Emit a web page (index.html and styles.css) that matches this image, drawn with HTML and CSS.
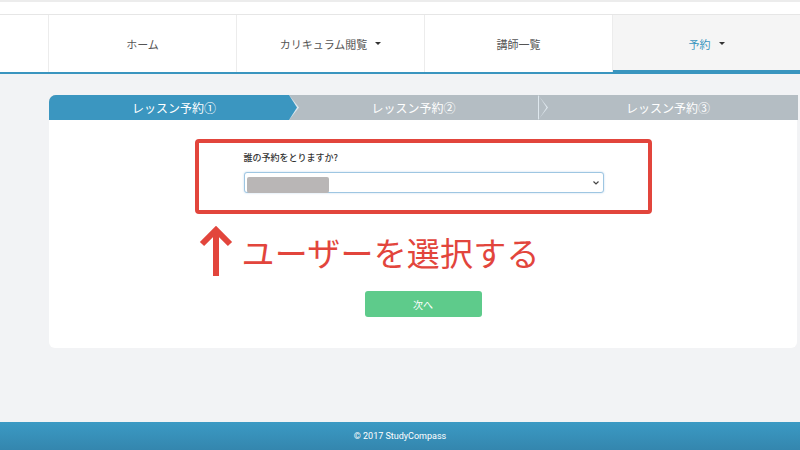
FILE: index.html
```html
<!DOCTYPE html>
<html lang="ja">
<head>
<meta charset="utf-8">
<title>レッスン予約</title>
<link rel="stylesheet" href="styles.css">
</head>
<body>
<div class="page">
  <div class="topbar"></div>
  <nav class="nav">
    <div class="nav-blank"></div>
    <a class="nav-item">ホーム</a>
    <a class="nav-item">カリキュラム閲覧<span class="caret"></span></a>
    <a class="nav-item">講師一覧</a>
    <a class="nav-item active">予約<span class="caret"></span></a>
  </nav>
  <main class="main">
    <div class="steps">
      <div class="step step1">レッスン予約①</div>
      <div class="step step2">レッスン予約②</div>
      <div class="step step3">レッスン予約③</div>
    </div>
    <div class="card">
      <div class="inner">
        <div class="highlight">
          <div class="field">
            <div class="label">誰の予約をとりますか?</div>
            <div class="select">
              <span class="blur"></span>
              <svg class="chev" width="8" height="6" viewBox="0 0 8 6"><path d="M1.5 1.5 L4 4 L6.5 1.5" fill="none" stroke="#444" stroke-width="1.2"/></svg>
            </div>
          </div>
        </div>
        <div class="note">
          <svg class="arrow" width="34" height="52" viewBox="0 0 34 52">
            <path d="M17 4 V50" stroke="#e2453c" stroke-width="6" fill="none"/>
            <path d="M3 18 L17 4 L31 18" stroke="#e2453c" stroke-width="6" fill="none" stroke-linejoin="miter"/>
          </svg>
          <span class="note-text">ユーザーを選択する</span>
        </div>
        <div class="actions">
          <button class="next">次へ</button>
        </div>
      </div>
    </div>
  </main>
  <footer class="footer">© 2017 StudyCompass</footer>
</div>
</body>
</html>
```
FILE: styles.css
```css
* { box-sizing: border-box; }
html, body { margin: 0; padding: 0; }
body {
  font-family: "Noto Sans CJK JP", "Noto Sans", sans-serif;
  background: #f2f3f5;
  color: #333;
}
.page {
  min-height: 450px;
  display: flex;
  flex-direction: column;
}
.topbar {
  height: 14px;
  background: #fff;
  border-top: 2px solid #ececec;
}
.nav {
  display: flex;
  height: 60px;
  background: #fff;
  border-top: 1px solid #e6e6e6;
  border-bottom: 2px solid #3a95bf;
}
.nav-blank {
  width: 49px;
  border-right: 1px solid #ececec;
}
.nav-item {
  flex: 1;
  display: flex;
  align-items: center;
  justify-content: center;
  font-size: 11px;
  color: #555;
  border-right: 1px solid #ececec;
}
.nav-item:last-child { border-right: none; }
.nav-item.active {
  background: #f5f5f5;
  color: #3a95bf;
  box-shadow: inset 0 -2px 0 #3a95bf;
}
.caret {
  display: inline-block;
  margin-left: 8px;
  width: 0;
  height: 0;
  border-left: 3px solid transparent;
  border-right: 3px solid transparent;
  border-top: 3.5px solid #333;
}
.main {
  flex: 1;
  padding: 21px 2px 0 49px;
}
.steps {
  display: flex;
  height: 25px;
  background: #b4bdc3;
  border-top-left-radius: 7px;
}
.step {
  position: relative;
  display: flex;
  align-items: center;
  justify-content: center;
  color: #fff;
  font-size: 12px;
}
.step1 {
  width: 240px;
  background: #3b96c0;
  border-top-left-radius: 7px;
  z-index: 3;
  padding-left: 10px;
}
.step2 { width: 249px; z-index: 2; }
.step3 { flex: 1; z-index: 1; }
.step1::before, .step2::before {
  content: "";
  position: absolute;
  top: 0;
  right: -10px;
  width: 10px;
  height: 25px;
  background: #dfe8ee;
  clip-path: polygon(0 0, 100% 50%, 0 100%);
}
.step1::after, .step2::after {
  content: "";
  position: absolute;
  top: 0;
  right: -8px;
  width: 8px;
  height: 25px;
  clip-path: polygon(0 0, 100% 50%, 0 100%);
}
.step1::after { background: #3b96c0; }
.step2::after { background: #b4bdc3; right: -8.5px; }
.card {
  background: #fff;
  height: 228px;
  border-radius: 0 0 6px 6px;
  margin-right: 1px;
  padding-top: 19px;
}
.inner {
  width: 457px;
  margin: 0 auto;
}
.highlight {
  border: 4px solid #e2453c;
  border-radius: 4px;
  height: 75px;
  padding: 9px 0 0 45px;
}
.field { width: 360px; }
.label {
  font-size: 9px;
  font-weight: 500;
  line-height: 12px;
  color: #333;
}
.select {
  position: relative;
  margin-top: 8px;
  height: 21px;
  border: 1px solid #9ec6e2;
  border-radius: 3px;
  box-shadow: 0 0 2px rgba(102,160,210,.45);
  background: #fff;
}
.blur {
  position: absolute;
  left: 2px;
  top: 4px;
  width: 82px;
  height: 16px;
  background: #b9b6b6;
  border-radius: 2px;
}
.chev {
  position: absolute;
  right: 3px;
  top: 7px;
}
.note {
  display: flex;
  align-items: center;
  margin-top: 12px;
  padding-left: 4px;
  height: 52px;
}
.arrow { display: block; }
.note-text {
  margin-left: 9px;
  font-size: 33px;
  line-height: 40px;
  color: #e2453c;
  letter-spacing: 0.2px;
}
.actions {
  display: flex;
  justify-content: center;
  margin-top: 13px;
}
.next {
  width: 117px;
  height: 26px;
  border: none;
  border-radius: 3px;
  background: #5ecb8b;
  color: #fff;
  font-family: inherit;
  font-size: 10px;
  padding: 0;
}
.footer {
  height: 28px;
  background: linear-gradient(#3b9ac4, #3486ae);
  color: #fff;
  font-size: 9px;
  display: flex;
  align-items: center;
  justify-content: center;
  font-family: "Roboto", "Noto Sans CJK JP", sans-serif;
}
```
